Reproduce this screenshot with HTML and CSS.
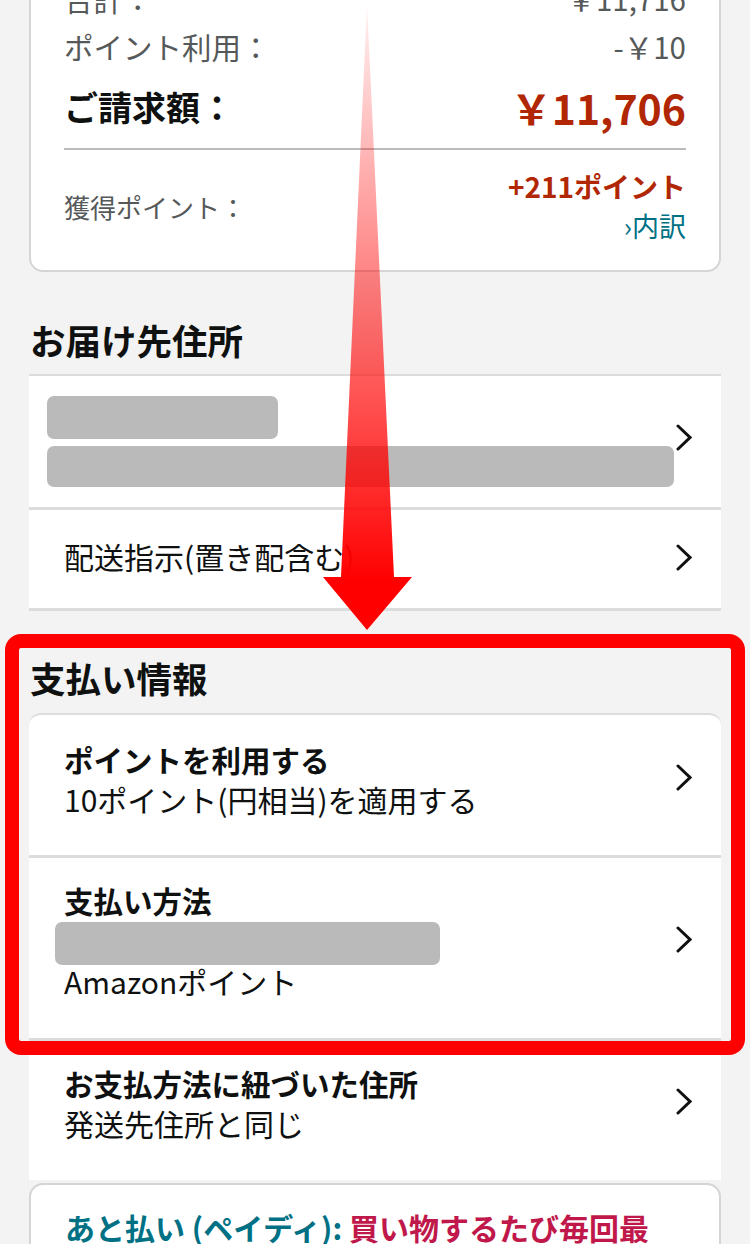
FILE: index.html
```html
<!DOCTYPE html>
<html lang="ja">
<head>
<meta charset="utf-8">
<title>注文の確定</title>
<link rel="stylesheet" href="styles.css">
</head>
<body>
<div class="page">
  <div class="summary">
    <div class="srow"><span class="label">合計：</span><span class="value">￥11,716</span></div>
    <div class="srow"><span class="label">ポイント利用：</span><span class="value">-￥10</span></div>
    <div class="srow total"><span class="total-label">ご請求額：</span><span class="total-value">￥11,706</span></div>
    <div class="divider"></div>
    <div class="points">
      <span class="label points-label">獲得ポイント：</span>
      <div class="points-right">
        <span class="points-value">+211ポイント</span>
        <span class="points-link">›内訳</span>
      </div>
    </div>
  </div>

  <h2 class="section-title ship-title">お届け先住所</h2>
  <div class="panel panel-bottom">
    <div class="item addr">
      <div class="item-body">
        <div class="redact redact-name"></div>
        <div class="redact redact-addr"></div>
      </div>
      <svg class="chev" viewBox="0 0 16 27"><path d="M2 2 L14 13.5 L2 25"/></svg>
    </div>
    <div class="item simple">
      <div class="item-body"><span class="text">配送指示(置き配含む)</span></div>
      <svg class="chev" viewBox="0 0 16 27"><path d="M2 2 L14 13.5 L2 25"/></svg>
    </div>
  </div>

  <h2 class="section-title pay-title">支払い情報</h2>
  <div class="panel panel-rounded">
    <div class="item pay-points">
      <div class="item-body">
        <div class="bold-line">ポイントを利用する</div>
        <div class="text-line">10ポイント(円相当)を適用する</div>
      </div>
      <svg class="chev" viewBox="0 0 16 27"><path d="M2 2 L14 13.5 L2 25"/></svg>
    </div>
    <div class="item pay-method">
      <div class="item-body">
        <div class="bold-line short">支払い方法</div>
        <div class="redact redact-card"></div>
        <div class="text-line short">Amazonポイント</div>
      </div>
      <svg class="chev" viewBox="0 0 16 27"><path d="M2 2 L14 13.5 L2 25"/></svg>
    </div>
    <div class="item pay-addr">
      <div class="item-body">
        <div class="bold-line">お支払方法に紐づいた住所</div>
        <div class="text-line">発送先住所と同じ</div>
      </div>
      <svg class="chev" viewBox="0 0 16 27"><path d="M2 2 L14 13.5 L2 25"/></svg>
    </div>
  </div>

  <div class="promo">
    <p class="promo-text"><span class="teal">あと払い (ペイディ): </span><span class="crimson">買い物するたび毎回最大</span></p>
  </div>

  <div class="highlight"></div>
  <svg class="arrow" viewBox="0 0 95 632" width="95" height="632">
    <defs>
      <linearGradient id="ag" x1="0" y1="0" x2="0" y2="1">
        <stop offset="0" stop-color="#ff0000" stop-opacity="0.05"/>
        <stop offset="0.75" stop-color="#ff0000" stop-opacity="0.8"/>
        <stop offset="0.92" stop-color="#ff0000" stop-opacity="1"/>
        <stop offset="1" stop-color="#ff0000" stop-opacity="1"/>
      </linearGradient>
    </defs>
    <polygon points="47,4 74,577 92,577 47,630 3,577 21,577" fill="url(#ag)"/>
  </svg>
</div>
</body>
</html>
```

FILE: styles.css
```css
* { box-sizing: border-box; }

html, body {
  margin: 0;
  padding: 0;
  background: #f3f3f3;
}

body {
  font-family: "Noto Sans CJK JP", "Noto Sans", sans-serif;
  color: #0f1111;
}

.page {
  position: relative;
  display: flow-root;
  width: 750px;
  height: 1244px;
  overflow: hidden;
  padding: 0 29px;
}

/* ---------- order summary card ---------- */
.summary {
  margin-top: -25px;
  background: #fff;
  border: 2px solid #d5d5d5;
  border-top: 0;
  border-radius: 0 0 14px 14px;
  padding: 0 33px 24px;
}

.srow {
  display: flex;
  justify-content: space-between;
  align-items: center;
  height: 48px;
  padding-bottom: 2px;
}

.label, .value {
  font-size: 29.5px;
  color: #565959;
}

.srow.total {
  height: 77px;
  padding-bottom: 6px;
}

.total-label {
  font-size: 34px;
  font-weight: 700;
  color: #0f1111;
}

.total-value {
  font-size: 41px;
  font-weight: 700;
  color: #b12704;
}

.divider {
  height: 2px;
  background: #bbbbbb;
}

.points {
  display: flex;
  justify-content: space-between;
  align-items: center;
  padding-top: 16px;
}

.points .points-label {
  font-size: 26px;
}

.points-right {
  display: flex;
  flex-direction: column;
  align-items: flex-end;
}

.points-value {
  font-size: 28px;
  line-height: 40px;
  font-weight: 700;
  color: #b12704;
}

.points-link {
  font-size: 27px;
  line-height: 40px;
  color: #007185;
}

/* ---------- sections ---------- */
.section-title {
  margin: 0;
  padding-left: 1px;
  font-size: 35.5px;
  line-height: 40px;
  font-weight: 700;
  color: #0f1111;
}

.ship-title { margin: 48px 0 14px; }
.pay-title { margin: 47px 0 15px; }

.panel {
  background: #fff;
  border-top: 2px solid #dcdcdc;
}

.panel-bottom {
  border-bottom: 3px solid #dcdcdc;
}

.panel-rounded {
  border-radius: 12px 12px 0 0;
}

.item {
  display: flex;
  align-items: center;
  padding-right: 29px;
  padding-left: 35px;
}

.item + .item {
  border-top: 3px solid #dcdcdc;
}

.item-body {
  flex: 1;
  min-width: 0;
}

.chev {
  flex: none;
  width: 16px;
  height: 27px;
  margin-left: 2px;
  fill: none;
  stroke: #111;
  stroke-width: 3;
  stroke-linecap: round;
  stroke-linejoin: miter;
}

.redact {
  background: #bababa;
  border-radius: 7px;
}

.item.addr {
  padding: 20px 29px 20px 18px;
}

.item.addr .chev {
  margin-bottom: 8px;
}

.redact-name {
  width: 231px;
  height: 43px;
}

.redact-addr {
  margin-top: 7px;
  width: 627px;
  height: 41px;
}

.item.simple {
  padding-top: 26px;
  padding-bottom: 32px;
}

.item.simple .chev {
  margin-top: 2px;
}

.text {
  font-size: 30px;
  line-height: 40px;
}

.bold-line {
  font-size: 29.5px;
  line-height: 40px;
  font-weight: 700;
}

.text-line {
  font-size: 30px;
  line-height: 40px;
}

.bold-line.short {
  line-height: 30px;
  padding-bottom: 6px;
}

.text-line.short {
  line-height: 32px;
  padding-bottom: 4px;
}

.item.pay-points {
  padding-top: 24px;
  padding-bottom: 36px;
}

.item.pay-points .chev,
.item.pay-addr .chev {
  margin-bottom: 4px;
}

.item.pay-method {
  padding-top: 27px;
  padding-bottom: 37px;
}

.item.pay-method .chev {
  margin-bottom: 8px;
}

.redact-card {
  margin: 1px 0 0 -9px;
  width: 385px;
  height: 43px;
}

.item.pay-addr {
  padding-top: 22px;
  padding-bottom: 37px;
}

/* ---------- promo card ---------- */
.promo {
  margin-top: 3px;
  background: #fff;
  border: 2px solid #d5d5d5;
  border-radius: 14px;
  padding: 22px 54px 40px 34px;
}

.promo-text {
  margin: 0;
  font-size: 30px;
  line-height: 40px;
  font-weight: 700;
}

.teal { color: #007185; }
.crimson { color: #c0184a; }

/* ---------- annotations ---------- */
.highlight {
  position: absolute;
  left: 5px;
  top: 634px;
  width: 740px;
  height: 421px;
  border: 14px solid #ff0000;
  border-radius: 16px;
  pointer-events: none;
}

.arrow {
  position: absolute;
  left: 320px;
  top: 0;
  pointer-events: none;
}
```
